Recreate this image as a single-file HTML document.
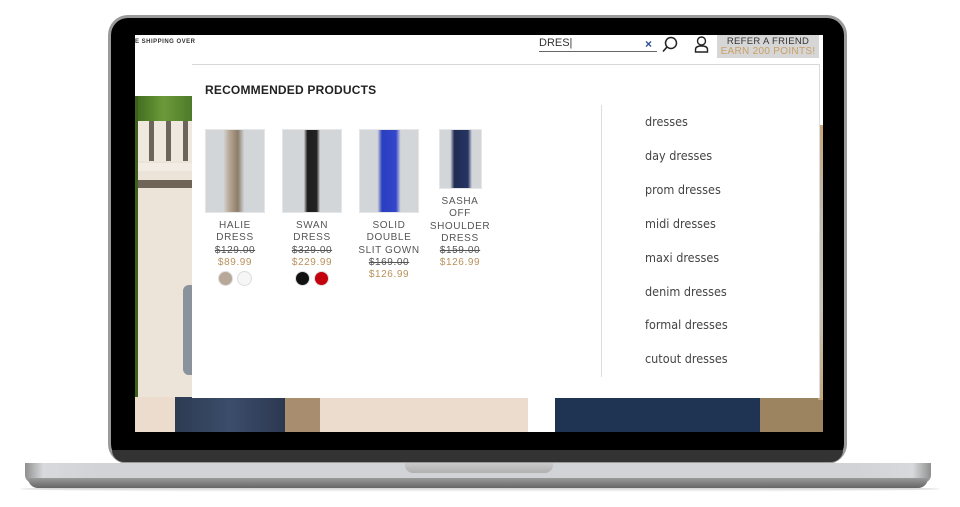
<!DOCTYPE html>
<html><head><meta charset="utf-8"><style>
*{margin:0;padding:0;box-sizing:border-box}
body{width:960px;height:507px;background:#fff;position:relative;overflow:hidden;font-family:"Liberation Sans",sans-serif}
.a{position:absolute}
.frame{left:108px;top:15px;width:739px;height:449px;background:#9a9a9a;border-radius:20px}
.bezel{left:111px;top:18px;width:733px;height:443px;background:#000;border-radius:17px}
.bz2{left:112px;top:450px;width:731px;height:12px;background:#333;border-radius:0 0 14px 14px}
.base{left:25px;top:463px;width:906px;height:20px;background:linear-gradient(90deg,#8f8f8f 0%,#d8d9dc 2%,#d2d3d7 8%,#d2d3d7 92%,#d8d9dc 98%,#8f8f8f 100%);border-radius:0 0 8px 8px}
.base2{left:28px;top:478px;width:900px;height:10px;background:linear-gradient(#9a9a9a,#666);border-radius:0 0 30px 30px}
.shadow{left:20px;top:486px;width:920px;height:6px;background:linear-gradient(#bbb,#fff);border-radius:50%}
.notch{left:405px;top:463px;width:148px;height:10px;background:linear-gradient(#c9c9c9,#b0b0b0);border-radius:0 0 8px 8px}
.screen{left:135px;top:35px;width:688px;height:397px;background:#fff;overflow:hidden}
.txt{color:#444;font-size:9px;letter-spacing:.5px}
.prod{position:absolute;text-align:center;font-size:10px;color:#555;letter-spacing:.6px;line-height:12.3px}
.prod .img{margin:0 auto 7px;background:#d4d6d8;border:1px solid #e6e6e6}
.old{text-decoration:line-through;color:#555}
.new{color:#b8915c}
.sw{display:inline-block;width:15px;height:15px;border-radius:50%;margin:2px 2px;border:1px solid #ddd}
.sug{position:absolute;left:510px;font-size:12.5px;color:#444;font-family:"DejaVu Sans Condensed","Liberation Sans",sans-serif}
</style></head><body>
<div class="a shadow"></div>
<div class="a frame"></div>
<div class="a bezel"></div>
<div class="a bz2"></div>
<div class="a base"></div>
<div class="a base2"></div>
<div class="a notch"></div>
<div class="a screen">
  <div class="a txt" style="left:0;top:4px;font-size:6px;font-weight:bold;color:#333">E SHIPPING OVER</div>
  <div class="a" style="left:0;top:61px;width:57px;height:25px;background:linear-gradient(90deg,#3f6a1e,#6c9a3a,#4e7a2a)"></div>
  <div class="a" style="left:0;top:86px;width:57px;height:310px;background:#ece3d9"></div>
  <div class="a" style="left:2px;top:86px;width:55px;height:40px;background:repeating-linear-gradient(90deg,#efe8de 0 12px,#6c655c 12px 17px)"></div>
  <div class="a" style="left:0;top:128px;width:57px;height:8px;background:#f2ece4"></div>
  <div class="a" style="left:0;top:145px;width:57px;height:8px;background:#6e6557"></div>
  <div class="a" style="left:0;top:61px;width:3px;height:336px;background:#3d5f1a"></div>
  <div class="a" style="left:48px;top:250px;width:10px;height:90px;background:#8a929c;border-radius:6px 0 0 6px"></div>
  <div class="a" style="left:0;top:362px;width:393px;height:35px;background:#ebdccd"></div>
  <div class="a" style="left:40px;top:362px;width:110px;height:35px;background:linear-gradient(90deg,#2d3b52,#3b4d6b,#2c3850)"></div>
  <div class="a" style="left:150px;top:362px;width:35px;height:35px;background:#a88d6f"></div>
  <div class="a" style="left:420px;top:362px;width:205px;height:35px;background:#1f3352"></div>
  <div class="a" style="left:625px;top:362px;width:63px;height:35px;background:#9c8460"></div>
  <div class="a" style="left:683px;top:90px;width:5px;height:275px;background:linear-gradient(#c7a777,#bfb9b0,#c9c3b8,#c2a77a)"></div>
  <div class="a" style="left:404px;top:2px;font-size:11px;color:#333">DRES|</div>
  <div class="a" style="left:404px;top:16px;width:118px;height:1px;background:#666"></div>
  <div class="a" style="left:510px;top:2px;font-size:12px;color:#2a4d8f;font-weight:bold">×</div>
  <svg class="a" style="left:526px;top:1px" width="18" height="17" viewBox="0 0 18 17"><circle cx="10" cy="7" r="5.5" fill="none" stroke="#222" stroke-width="1.5"/><path d="M6 11 L2 15.5" stroke="#222" stroke-width="1.6"/></svg>
  <svg class="a" style="left:559px;top:1px" width="15" height="17" viewBox="0 0 15 17"><circle cx="7.5" cy="5" r="4" fill="none" stroke="#222" stroke-width="1.4"/><path d="M1.5 16 V13.5 Q1.5 10 7.5 10 Q13.5 10 13.5 13.5 V16 Z" fill="none" stroke="#222" stroke-width="1.4"/></svg>
  <div class="a" style="left:582px;top:0;width:102px;height:23px;background:#d6d6d6;text-align:center;font-size:9.5px;line-height:9.5px;padding-top:2px;letter-spacing:.3px"><div style="color:#333">REFER A FRIEND</div><div style="color:#c9a065;font-size:10px">EARN 200 POINTS!</div></div>
  <div class="a" style="left:57px;top:29px;width:628px;height:334px;background:#fff;border-top:1px solid #d8d8d8;border-right:1px solid #ddd"></div>
  <div class="a" style="left:70px;top:48px;font-size:12px;font-weight:bold;color:#222;letter-spacing:.2px">RECOMMENDED PRODUCTS</div>
  <div class="a" style="left:466px;top:70px;width:1px;height:272px;background:#ddd"></div>
  <div class="prod" style="left:65px;top:94px;width:70px"><div class="img" style="width:60px;height:84px;background:linear-gradient(90deg,#d3d6d9 30%,#b8a894 40%,#8c7c6a 55%,#d3d6d9 66%)"></div>HALIE<br>DRESS<br><span class="old">$129.00</span><br><span class="new">$89.99</span><br><span class="sw" style="background:#b8a898"></span><span class="sw" style="background:#f6f6f6"></span></div>
  <div class="prod" style="left:142px;top:94px;width:70px"><div class="img" style="width:60px;height:84px;background:linear-gradient(90deg,#d3d6d9 36%,#1e1e1e 42%,#222 58%,#d3d6d9 64%)"></div>SWAN<br>DRESS<br><span class="old">$329.00</span><br><span class="new">$229.99</span><br><span class="sw" style="background:#111"></span><span class="sw" style="background:#c2000e"></span></div>
  <div class="prod" style="left:219px;top:94px;width:70px"><div class="img" style="width:60px;height:84px;background:linear-gradient(90deg,#d3d6d9 30%,#2a3ec0 38%,#3446cc 62%,#d3d6d9 70%)"></div>SOLID<br>DOUBLE<br>SLIT GOWN<br><span class="old">$169.00</span><br><span class="new">$126.99</span></div>
  <div class="prod" style="left:294px;top:94px;width:62px"><div class="img" style="width:43px;height:60px;background:linear-gradient(90deg,#d3d6d9 25%,#1f2c52 35%,#263463 68%,#d3d6d9 78%)"></div>SASHA<br>OFF<br>SHOULDER<br>DRESS<br><span class="old">$159.00</span><br><span class="new">$126.99</span></div>
  <div class="sug" style="top:79px">dresses</div>
  <div class="sug" style="top:113px">day dresses</div>
  <div class="sug" style="top:147px">prom dresses</div>
  <div class="sug" style="top:181px">midi dresses</div>
  <div class="sug" style="top:215px">maxi dresses</div>
  <div class="sug" style="top:249px">denim dresses</div>
  <div class="sug" style="top:282px">formal dresses</div>
  <div class="sug" style="top:316px">cutout dresses</div>
</div>
</body></html>
